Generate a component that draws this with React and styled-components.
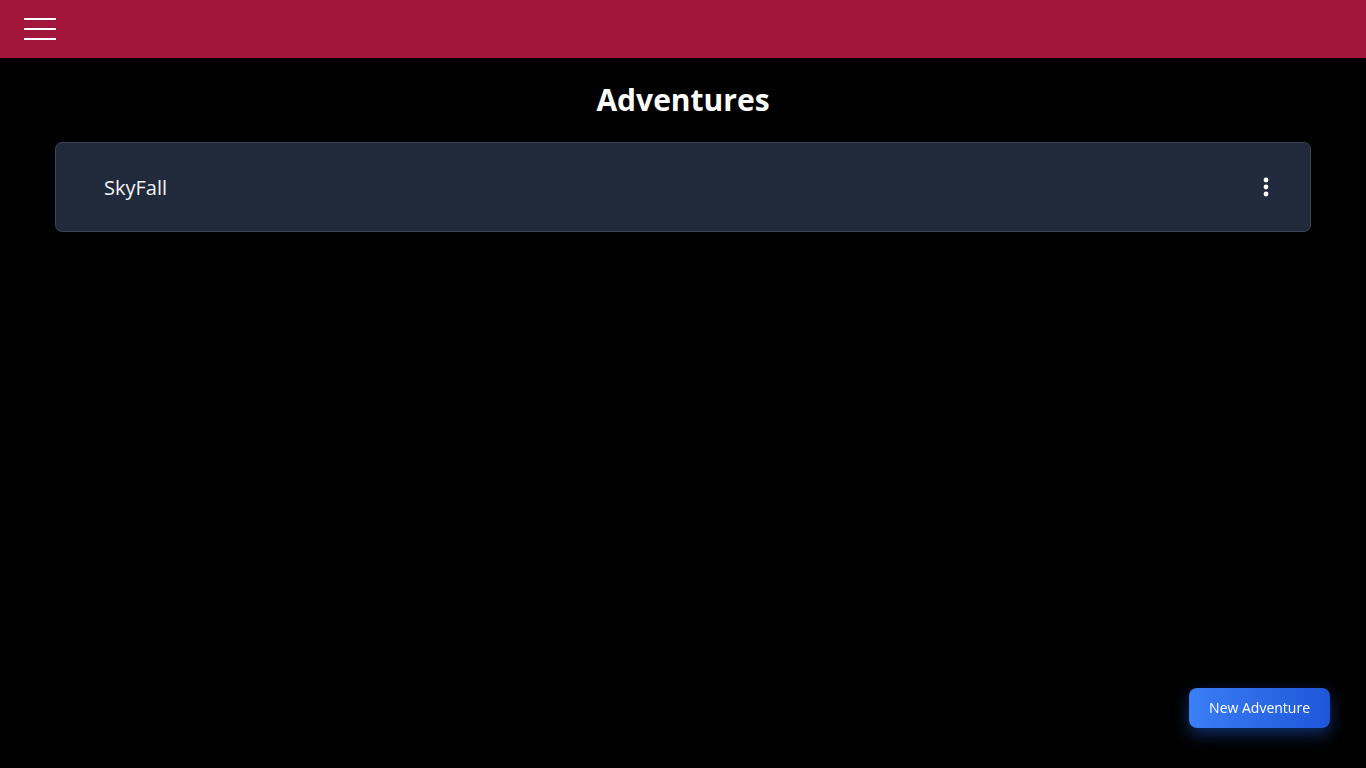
import styled, { createGlobalStyle } from "styled-components";

const GlobalStyle = createGlobalStyle`
  html, body {
    margin: 0;
    padding: 0;
    background: #000;
    color: #fff;
    font-family: "Open Sans", "Noto Sans", sans-serif;
  }
`;

const Page = styled.div`
  min-height: 100vh;
  background: #000;
`;

const Header = styled.header`
  height: 58px;
  background: #a3163c;
  display: flex;
  align-items: center;
  padding: 0 24px;
`;

const MenuButton = styled.button`
  width: 32px;
  height: 22px;
  padding: 0;
  border: none;
  background: transparent;
  display: flex;
  flex-direction: column;
  justify-content: space-between;
  cursor: pointer;
`;

const MenuLine = styled.span`
  display: block;
  height: 2px;
  width: 100%;
  background: #fff;
`;

const Main = styled.main`
  padding: 0 55px;
`;

const Title = styled.h1`
  margin: 0;
  padding: 22px 0 22px;
  text-align: center;
  font-size: 30px;
  line-height: 40px;
  font-weight: 700;
`;

const List = styled.div`
  display: flex;
  flex-direction: column;
  gap: 12px;
`;

const Card = styled.div`
  height: 88px;
  display: flex;
  align-items: center;
  justify-content: space-between;
  padding: 0 34px 0 48px;
  background: #212a3a;
  border: 1px solid #3a4454;
  border-radius: 7px;
`;

const CardName = styled.span`
  font-size: 20px;
  color: #f3f4f6;
`;

const MoreButton = styled.button`
  width: 20px;
  height: 30px;
  border: none;
  background: transparent;
  display: flex;
  align-items: center;
  justify-content: center;
  padding: 0;
  cursor: pointer;
`;

const Fab = styled.button`
  position: fixed;
  right: 36px;
  bottom: 40px;
  height: 40px;
  padding: 0 20px 1px;
  border: none;
  border-radius: 8px;
  background: linear-gradient(90deg, #3b7ef6, #1e56d8);
  color: #fff;
  font-family: "Open Sans", sans-serif;
  font-size: 14px;
  line-height: 20px;
  box-shadow: 0 6px 16px rgba(37, 99, 235, 0.45);
  cursor: pointer;
`;

const adventures = [{ id: 1, name: "SkyFall" }];

const DotsIcon = () => (
  <svg width="8" height="22" viewBox="0 0 8 22">
    <circle cx="4" cy="4" r="2.4" fill="#fff" />
    <circle cx="4" cy="11" r="2.4" fill="#fff" />
    <circle cx="4" cy="18" r="2.4" fill="#fff" />
  </svg>
);

const App = () => {
  return (
    <Page>
      <GlobalStyle />
      <Header>
        <MenuButton aria-label="menu">
          <MenuLine />
          <MenuLine />
          <MenuLine />
        </MenuButton>
      </Header>
      <Main>
        <Title>Adventures</Title>
        <List>
          {adventures.map((a) => (
            <Card key={a.id}>
              <CardName>{a.name}</CardName>
              <MoreButton aria-label="more">
                <DotsIcon />
              </MoreButton>
            </Card>
          ))}
        </List>
      </Main>
      <Fab>New Adventure</Fab>
    </Page>
  );
};

export default App;
